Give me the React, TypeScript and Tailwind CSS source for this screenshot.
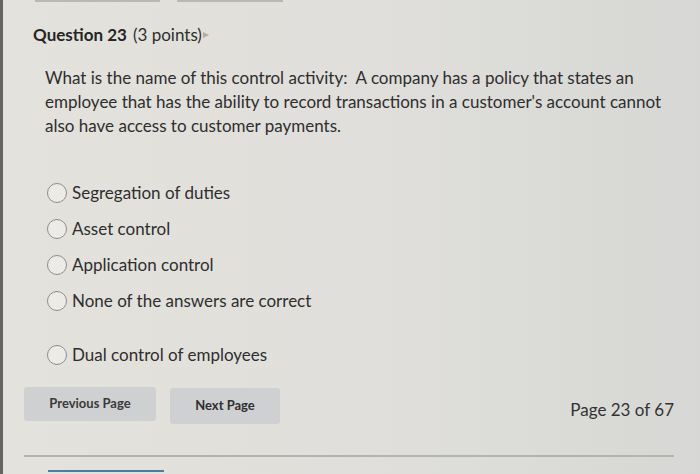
export default function App() {
  const options = [
    "Segregation of duties",
    "Asset control",
    "Application control",
    "None of the answers are correct",
  ];

  return (
    <div
      className="relative w-[700px] h-[474px] overflow-hidden flex bg-gradient-to-r from-[#e4e2dc] via-[#e0dfdb] to-[#d7d8d5] text-[#2e2e2e]"
      style={{ fontFamily: "Lato, 'Open Sans', sans-serif" }}
    >
      <div className="w-[3px] shrink-0 bg-[#67645e]" />
      <div className="absolute left-[35px] top-0 w-[125px] h-[2px] bg-[#b9b8b4]" />
      <div className="absolute left-[177px] top-0 w-[106px] h-[2px] bg-[#b9b8b4]" />

      <div className="flex-1 flex flex-col [&>*]:shrink-0">
        <h1 className="pl-[30px] pt-[23px] text-[17px] leading-6 flex items-center">
          <span className="font-bold text-[#262626]">Question 23</span>
          <span className="ml-[6px]">(3 points)</span>
          <span className="ml-[1px] w-0 h-0 border-y-[3px] border-y-transparent border-l-[6px] border-l-[#b9ab8e]" />
        </h1>

        {/* line breaks kept as in the quiz page */}
        <p className="pl-[42px] pt-[19px] whitespace-nowrap text-[17px] leading-[24px]">
          What is the name of this control activity:&nbsp; A company has a policy that states an
          <br />
          employee that has the ability to record transactions in a customer's account cannot
          <br />
          also have access to customer payments.
        </p>

        <div className="pl-[44px] pt-[37px] flex flex-col">
          {options.map((o) => (
            <label key={o} className="flex items-center gap-[5px] h-[36px] text-[17px]">
              <span className="w-[20px] h-[20px] rounded-full border border-[#8d8d8b] bg-[#ecebe7]" />
              <span>{o}</span>
            </label>
          ))}
          <label className="flex items-center gap-[5px] h-[36px] mt-[18px] text-[17px]">
            <span className="w-[20px] h-[20px] rounded-full border border-[#8d8d8b] bg-[#ecebe7]" />
            <span>Dual control of employees</span>
          </label>
        </div>

        <div className="pl-[21px] pr-[26px] mt-[14px] flex items-start">
          <button className="w-[132px] h-[34px] rounded-[3px] bg-[#cfd0d1] text-[13px] font-bold text-[#3a3a3a]">
            Previous Page
          </button>
          <button className="ml-[14px] w-[110px] h-[36px] mt-[1px] rounded-[3px] bg-[#cfd0d2] text-[13px] font-bold text-[#2f2f2f]">
            Next Page
          </button>
          <span className="ml-auto mt-[11px] text-[17px] leading-6 text-[#333]">Page 23 of 67</span>
        </div>

        <div className="ml-[21px] mr-[26px] mt-[31px] h-[2px] bg-[#b3b3b0]" />
        <div className="ml-[45px] mt-[13px] w-[116px] h-[2px] bg-[#4d7ba6]" />
      </div>
    </div>
  );
}
